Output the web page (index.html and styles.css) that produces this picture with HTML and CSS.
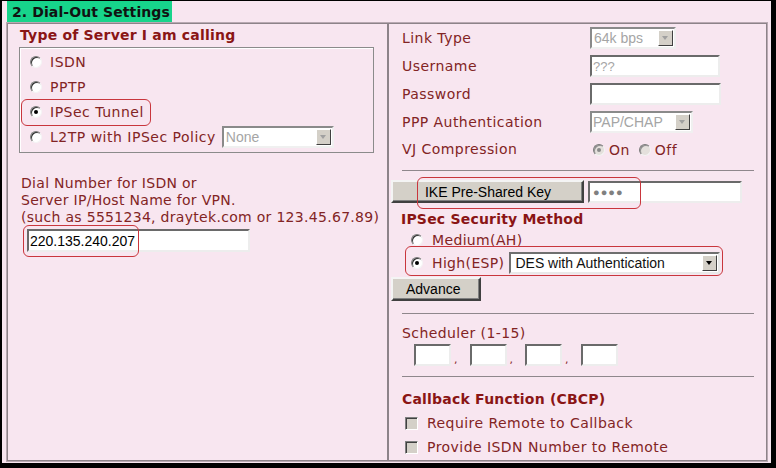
FILE: index.html
```html
<!DOCTYPE html>
<html lang="en">

<head>
  <meta charset="UTF-8" />
  <title>Dial-Out Settings</title>
  <link rel="stylesheet" href="styles.css">
</head>

<body>
  <div class="frame">
    <div class="tab">2. Dial-Out Settings</div>

    <div class="settings">
      <section class="col col-left">
        <h2 class="title">Type of Server I am calling</h2>
        <div class="server-box">
          <label class="opt"><input type="radio" class="radio" name="server"> ISDN</label>
          <label class="opt"><input type="radio" class="radio" name="server"> PPTP</label>
          <label class="opt"><span class="mark"><input type="radio" class="radio" name="server" checked> IPSec Tunnel</span></label>
          <label class="opt"><input type="radio" class="radio" name="server"> L2TP with IPSec Policy
            <span class="select select-policy is-disabled"><span class="select-value">None</span><span class="select-arrow"></span></span>
          </label>
        </div>

        <p class="dial-note">Dial Number for ISDN or<br>Server IP/Host Name for VPN.<br>(such as 5551234, draytek.com or 123.45.67.89)</p>
        <div class="dial-field">
          <input type="text" class="text text-dial" value="220.135.240.207">
          <span class="mark-ip"></span>
        </div>
      </section>

      <section class="col col-right">
        <div class="link-grid">
          <span class="lbl">Link Type</span>
          <span class="select select-link is-disabled"><span class="select-value">64k bps</span><span class="select-arrow"></span></span>
          <span class="lbl">Username</span>
          <input type="text" class="text text-user" value="???">
          <span class="lbl">Password</span>
          <input type="password" class="text text-pass">
          <span class="lbl">PPP Authentication</span>
          <span class="select select-ppp is-disabled"><span class="select-value">PAP/CHAP</span><span class="select-arrow"></span></span>
          <span class="lbl">VJ Compression</span>
          <span class="vj">
            <input type="radio" class="radio radio-off" name="vj" checked> On
            <input type="radio" class="radio radio-off vj-off" name="vj"> Off
          </span>
        </div>

        <hr class="rule rule-first">

        <div class="ike-row">
          <button class="btn btn-ike">IKE Pre-Shared Key</button>
          <input type="text" class="text text-key" value="&#9679;&#9679;&#9679;&#9679;">
          <span class="mark-ike"></span>
        </div>

        <h3 class="title title-ipsec">IPSec Security Method</h3>
        <label class="method"><input type="radio" class="radio" name="method"> Medium(AH)</label>
        <label class="method method-high">
          <input type="radio" class="radio" name="method" checked> High(ESP)
          <span class="select select-esp"><span class="select-value">DES with Authentication</span><span class="select-arrow"></span></span>
          <span class="mark-high"></span>
        </label>
        <button class="btn btn-advance">Advance</button>

        <hr class="rule rule-mid">

        <div class="lbl sched-label">Scheduler (1-15)</div>
        <div class="sched">
          <input type="text" class="text text-sched"><span class="comma">,</span>
          <input type="text" class="text text-sched"><span class="comma">,</span>
          <input type="text" class="text text-sched"><span class="comma">,</span>
          <input type="text" class="text text-sched">
        </div>

        <hr class="rule rule-last">

        <h3 class="title title-cbcp">Callback Function (CBCP)</h3>
        <label class="check check-first"><input type="checkbox" class="checkbox" disabled> Require Remote to Callback</label>
        <label class="check"><input type="checkbox" class="checkbox" disabled> Provide ISDN Number to Remote</label>
      </section>
    </div>
  </div>
</body>

</html>
```

FILE: styles.css
```css
body {
  margin: 0;
  background-color: #000;
  font-family: "DejaVu Sans", Verdana, sans-serif;
  font-size: 14px;
  color: #822424;
}

.frame {
  margin: 1px 5px 0 2px;
  height: 462px;
  background-color: #f8e6f0;
  padding: 0 3px 0 4px;
  box-sizing: border-box;
}

.tab {
  display: inline-block;
  margin-left: 1px;
  padding: 0 2px 0 5px;
  height: 21px;
  line-height: 22px;
  background-color: #17d48b;
  color: #111;
  font-weight: bold;
  font-size: 14px;
  letter-spacing: 0.1px;
}

.settings {
  display: flex;
  height: 440px;
  border: 1px solid #b9a9b2;
  box-sizing: border-box;
}

.col {
  border: 1px solid #8d8389;
  box-sizing: border-box;
}

.col-left {
  width: 381px;
  padding-left: 12px;
}

.col-right {
  flex: 1;
  padding: 0 12px 0 13px;
}

.title {
  margin: 0;
  font-size: 14px;
  font-weight: bold;
  color: #8a1515;
  line-height: 18px;
  letter-spacing: 0.2px;
}

.col-left .title {
  margin-top: 2px;
}

/* server type box */
.server-box {
  margin: 3px 0 0 -1px;
  width: 355px;
  height: 106px;
  box-sizing: border-box;
  border: 1px solid #8b8b8b;
  box-shadow: inset 1px 1px 0 #fff;
  padding: 1px 0 0 10px;
}

.opt {
  display: flex;
  align-items: center;
  height: 25px;
  letter-spacing: 0.5px;
}

.radio {
  appearance: none;
  margin: 0 8px 0 0;
  width: 12px;
  height: 12px;
  border-radius: 50%;
  border: 1px solid;
  border-color: #7a7a7a #f4f4f4 #f4f4f4 #7a7a7a;
  background-color: #fff;
  box-shadow: inset 1px 1px 0 #303030;
  position: relative;
  flex: none;
}

.radio:checked::after {
  content: "";
  position: absolute;
  left: 3px;
  top: 3px;
  width: 4px;
  height: 4px;
  border-radius: 50%;
  background-color: #000;
}

.radio-off {
  background-color: #e4e0dc;
  box-shadow: inset 1px 1px 0 #909090;
}

.radio-off:checked::after {
  background-color: #8a8a8a;
}

.mark {
  display: inline-flex;
  align-items: center;
  position: relative;
}

.mark::after {
  content: "";
  position: absolute;
  left: -9px;
  top: -5px;
  right: -7px;
  bottom: -6px;
  border: 1px solid #c9363d;
  border-radius: 6px;
}

/* fake selects */
.select {
  display: inline-flex;
  align-items: center;
  justify-content: space-between;
  box-sizing: border-box;
  height: 22px;
  border: 2px solid;
  border-color: #6f6f6f #e9e9e9 #e9e9e9 #6f6f6f;
  background-color: #fff;
  font-family: "Liberation Sans", Arial, sans-serif;
  font-size: 14px;
  color: #111;
  padding-left: 2px;
  letter-spacing: 0;
}

.select-arrow {
  width: 15px;
  height: 16px;
  margin-right: 1px;
  box-sizing: border-box;
  background-color: #d4d0c8;
  border: 1px solid;
  border-color: #fff #404040 #404040 #fff;
  position: relative;
}

.select-arrow::after {
  content: "";
  position: absolute;
  left: 3px;
  top: 5px;
  border-style: solid;
  border-width: 4px 3.5px 0 3.5px;
  border-color: #000 transparent transparent transparent;
}

.is-disabled {
  color: #a5a5a5;
  border-color: #8a8a8a #f0f0f0 #f0f0f0 #8a8a8a;
}

.is-disabled .select-arrow::after {
  border-top-color: #a0a0a0;
}

.select-policy {
  width: 112px;
  margin-left: 6px;
}

.select-link {
  width: 86px;
}

.select-ppp {
  width: 103px;
  padding-left: 1px;
}

.select-esp {
  width: 211px;
  height: 22px;
  margin-left: 5px;
  padding-left: 4px;
}

/* text inputs */
.text {
  box-sizing: border-box;
  height: 22px;
  margin: 0;
  border: 2px solid;
  border-color: #6a6a6a #ededed #ededed #6a6a6a;
  background-color: #fff;
  font-family: "Liberation Sans", Arial, sans-serif;
  font-size: 14px;
  color: #000;
  padding: 0 1px;
}

.dial-note {
  margin: 22px 0 0 1px;
  line-height: 17px;
  letter-spacing: 0.3px;
}

.dial-field {
  position: relative;
  margin: 3px 0 0 7px;
  width: 223px;
}

.text-dial {
  width: 223px;
  height: 23px;
}

.mark-ip {
  position: absolute;
  left: -4px;
  top: -4px;
  width: 114px;
  height: 30px;
  border: 1px solid #c9363d;
  border-radius: 6px;
}

/* right column */
.link-grid {
  display: grid;
  grid-template-columns: 188px 1fr;
  grid-template-rows: 28px 28px 28px 28px 26px;
  align-items: center;
  justify-items: start;
  letter-spacing: 0.45px;
}

.text-user {
  width: 130px;
  color: #a5a5a5;
  font-size: 13px;
}

.text-pass {
  width: 131px;
}

.vj {
  display: flex;
  align-items: center;
  margin-left: 3px;
  padding-top: 2px;
}

.vj .radio {
  margin-right: 4px;
}

.vj .vj-off {
  margin-left: 9px;
}

.rule {
  border: 0;
  border-top: 1px solid #8f878c;
  margin: 0;
}

.rule-first {
  margin-top: 8px;
}

.rule-mid {
  margin-top: 12px;
}

.rule-last {
  margin-top: 10px;
}

.ike-row {
  position: relative;
  display: flex;
  align-items: center;
  margin: 9px 0 0 -11px;
}

.btn {
  font-family: "Liberation Sans", Arial, sans-serif;
  font-size: 14px;
  color: #000;
  background-color: #d4d0c8;
  border: 2px solid;
  border-color: #f4f4f4 #404040 #404040 #f4f4f4;
  box-shadow: inset -1px -1px 0 #808080;
  margin: 0;
  padding: 0;
  box-sizing: border-box;
}

.btn-ike {
  width: 193px;
  height: 23px;
  padding-left: 1px;
}

.text-key {
  width: 154px;
  margin-left: 4px;
  color: #808080;
  font-size: 11px;
  letter-spacing: 1px;
  padding-left: 3px;
}

.mark-ike {
  position: absolute;
  left: 26px;
  top: -3px;
  width: 222px;
  height: 30px;
  border: 1px solid #c9363d;
  border-radius: 6px;
}

.title-ipsec {
  margin-top: 7px;
  margin-left: -1px;
  font-size: 14px;
}

.method {
  display: flex;
  align-items: center;
  height: 23px;
  margin-left: 9px;
  letter-spacing: 0.35px;
}

.method .radio {
  margin-right: 9px;
}

.method-high {
  position: relative;
}

.mark-high {
  position: absolute;
  left: -6px;
  top: -5px;
  width: 316px;
  height: 28px;
  border: 1px solid #c9363d;
  border-radius: 6px;
}

.btn-advance {
  display: block;
  width: 90px;
  height: 24px;
  margin: 3px 0 0 -11px;
  text-align: left;
  padding-left: 13px;
}

.sched-label {
  margin-top: 10px;
  line-height: 18px;
  letter-spacing: 0.4px;
}

.sched {
  display: flex;
  align-items: flex-end;
  margin: 2px 0 0 12px;
  color: #822424;
  font-size: 11px;
  line-height: 12px;
}

.text-sched {
  width: 37px;
}

.comma {
  margin: 0 12px 0 3px;
}

.title-cbcp {
  margin-top: 13px;
}

.check {
  display: flex;
  align-items: center;
  height: 24px;
  margin-left: 3px;
  letter-spacing: 0.45px;
}

.check-first {
  margin-top: 3px;
}

.checkbox {
  appearance: none;
  width: 13px;
  height: 13px;
  margin: 0 9px 0 0;
  border: 1px solid;
  border-color: #808080 #fff #fff #808080;
  box-shadow: inset 1px 1px 0 #404040;
  background-color: #d4d0c8;
}
```
